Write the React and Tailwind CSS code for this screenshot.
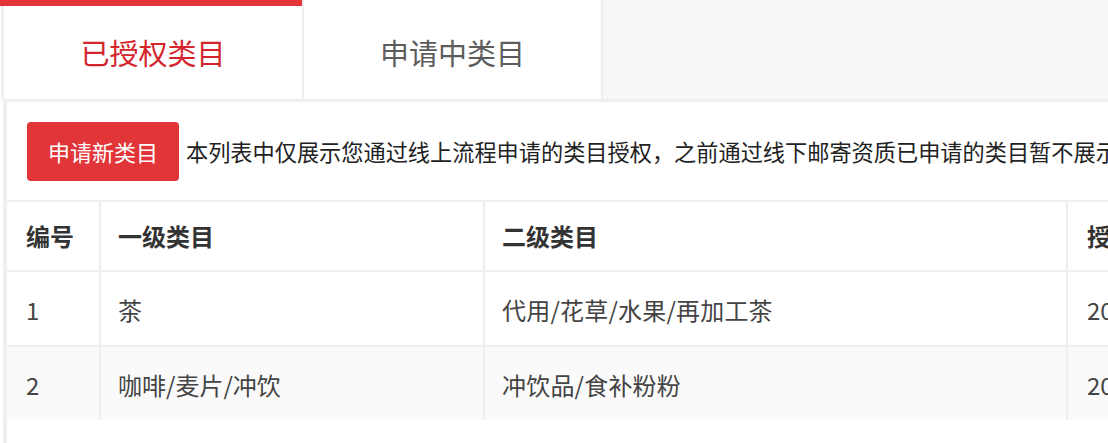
import React from 'react';

const rows = [
  { id: 1, first: '茶', second: '代用/花草/水果/再加工茶', date: '2019-03-12 10:21:45' },
  { id: 2, first: '咖啡/麦片/冲饮', second: '冲饮品/食补粉粉', date: '2019-03-12 10:21:45' },
];

const Tabs = () => (
  <div className="flex h-[99px] bg-[#f7f7f7]">
    <div className="flex w-[302px] flex-col bg-white">
      <div className="h-[6px] bg-[#e1353a]" />
      <div className="ml-px flex flex-1 items-center justify-center border-l-[3px] border-[#f0f0f0] text-[29px] text-[#d4252c]">
        已授权类目
      </div>
    </div>
    <div className="flex w-[301px] items-center justify-center border-l-2 border-r-2 border-[#eeeeee] bg-white pt-[6px] text-[29px] text-[#5c5c5c]">
      申请中类目
    </div>
  </div>
);

const Table = () => (
  <div className="mt-[19px] w-[1400px]">
    <div className="flex h-[70px] border-t-2 border-[#efefef] bg-white text-[24px] font-bold text-[#333]">
      <div className="flex w-[92px] items-center pl-[19px]">编号</div>
      <div className="flex w-[384px] items-center border-l-2 border-[#efefef] pl-[17px]">一级类目</div>
      <div className="flex w-[583px] items-center border-l-2 border-[#efefef] pl-[17px]">二级类目</div>
      <div className="flex w-[300px] items-center border-l-2 border-[#efefef] pl-[19px]">授权时间</div>
    </div>
    {rows.map((r, i) => (
      <div
        key={r.id}
        className={`flex h-[75px] border-t-2 border-[#efefef] text-[24px] text-[#444] ${i % 2 === 1 ? 'bg-[#fafafa]' : 'bg-white'}`}
      >
        <div className="flex w-[92px] items-center pl-[19px] pt-[3px]">{r.id}</div>
        <div className="flex w-[384px] items-center border-l-2 border-[#efefef] pl-[17px] pt-[3px]">{r.first}</div>
        <div className="flex w-[583px] items-center border-l-2 border-[#efefef] pl-[17px] pt-[3px] tracking-[0.2px]">{r.second}</div>
        <div className="flex w-[300px] items-center border-l-2 border-[#efefef] pl-[19px] pt-[3px] whitespace-nowrap">{r.date}</div>
      </div>
    ))}
  </div>
);

const App = () => {
  return (
    <div
      className="h-[443px] w-[1108px] overflow-hidden bg-white"
      style={{ fontFamily: '"Noto Sans CJK SC", "Noto Sans", sans-serif' }}
    >
      <Tabs />
      <div className="ml-[3px] h-[344px] border-l-4 border-t-[3px] border-[#efefef] pt-[20px]">
        <div className="flex items-center gap-[7px] pl-[20px] whitespace-nowrap">
          <button className="h-[59px] w-[152px] shrink-0 rounded-[4px] bg-[#e1353a] text-[22px] text-white">
            申请新类目
          </button>
          <span className="text-[22.2px] text-[#222]">
            本列表中仅展示您通过线上流程申请的类目授权，之前通过线下邮寄资质已申请的类目暂不展示
          </span>
        </div>
        <Table />
      </div>
    </div>
  );
};

export default App;
